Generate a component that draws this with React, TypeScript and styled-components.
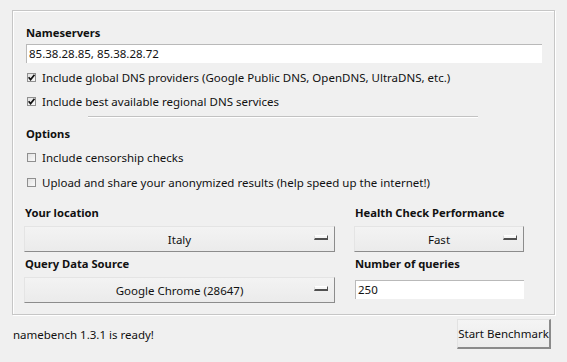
import React from "react";
import styled, { createGlobalStyle } from "styled-components";

const Global = createGlobalStyle`
  html, body { margin: 0; padding: 0; }
  body {
    background: #f0f0f0;
    font-family: "Noto Sans", "Open Sans", sans-serif;
    font-size: 11.5px;
    color: #111;
  }
`;

const Window = styled.div`
  width: 567px;
  height: 362px;
  box-sizing: border-box;
  padding: 10px 12px 0 12px;
  background: #f0f0f0;
  display: flex;
  flex-direction: column;
`;

const Panel = styled.div`
  box-sizing: border-box;
  width: 543px;
  height: 305px;
  border: 1px solid #c6c6c6;
  box-shadow: inset 1px 1px 0 #ffffff, 1px 1px 0 #ffffff;
  padding: 14px 12px 0 13px;
  display: flex;
  flex-direction: column;
`;

const Heading = styled.div<{ $mt?: number; $ml?: number }>`
  font-weight: 700;
  font-size: 11.2px;
  line-height: 16px;
  height: 16px;
  margin-top: ${(p) => p.$mt ?? 0}px;
  margin-left: ${(p) => p.$ml ?? 0}px;
`;

const TextInput = styled.div<{ $w?: number; $mt?: number; $ml?: number }>`
  box-sizing: border-box;
  width: ${(p) => (p.$w ? `${p.$w}px` : "100%")};
  height: 19px;
  margin-top: ${(p) => p.$mt ?? 0}px;
  margin-left: ${(p) => p.$ml ?? 0}px;
  background: #fff;
  border-top: 1px solid #b9b9b9;
  border-left: 1px solid #b9b9b9;
  padding: 0 2px;
  font-size: 11.5px;
  line-height: 18px;
  white-space: nowrap;
`;

const CheckRow = styled.label<{ $mt: number }>`
  display: flex;
  align-items: center;
  gap: 6px;
  margin-top: ${(p) => p.$mt}px;
  margin-left: 1px;
  height: 16px;
  font-size: 11.5px;
  white-space: nowrap;
`;

const Box = styled.span`
  box-sizing: border-box;
  width: 9px;
  height: 9px;
  border: 1px solid #8f8f8f;
  background: linear-gradient(135deg, #e2e2e2, #fafafa);
  display: inline-flex;
  align-items: center;
  justify-content: center;
`;

const Separator = styled.div`
  height: 1px;
  background: #c2c2c2;
  border-bottom: 1px solid #fff;
  margin: 7px 0 0 62px;
  width: 390px;
`;

const Grid = styled.div`
  display: grid;
  grid-template-columns: 311px 170px;
  column-gap: 19px;
  margin-top: 15px;
  margin-left: -2px;
`;

const Cell = styled.div<{ $mt?: number }>`
  display: flex;
  flex-direction: column;
  margin-top: ${(p) => p.$mt ?? 0}px;
`;

const Select = styled.div`
  box-sizing: border-box;
  height: 26px;
  margin-top: 5px;
  border-top: 1px solid #e4e4e4;
  border-left: 1px solid #e4e4e4;
  border-right: 1px solid #8c8c8c;
  border-bottom: 1px solid #8c8c8c;
  background: linear-gradient(#f3f3f3, #ebebeb);
  position: relative;
  display: flex;
  align-items: center;
  justify-content: center;
  font-size: 11.5px;
`;

const Indicator = styled.span`
  position: absolute;
  right: 6px;
  top: 8px;
  width: 14px;
  height: 5px;
  box-sizing: border-box;
  background: #f6f6f6;
  border-top: 1px solid #ffffff;
  border-left: 1px solid #dcdcdc;
  border-right: 1px solid #505050;
  border-bottom: 2px solid #505050;
`;

const Footer = styled.div`
  display: flex;
  align-items: center;
  justify-content: space-between;
  padding: 4px 4px 0 1px;
`;

const Status = styled.div`
  font-size: 11.5px;
`;

const Button = styled.button`
  box-sizing: border-box;
  width: 94px;
  height: 30px;
  font-family: inherit;
  font-size: 11.5px;
  white-space: nowrap;
  color: #111;
  background: linear-gradient(#f4f4f4, #ececec);
  border-top: 1px solid #e2e2e2;
  border-left: 1px solid #e2e2e2;
  border-right: 2px solid #8a8a8a;
  border-bottom: 2px solid #8a8a8a;
  padding: 0;
`;

const Check = ({ checked }: { checked: boolean }) => (
  <Box>
    {checked && (
      <svg width="7" height="7" viewBox="0 0 7 7">
        <path d="M0.6 3.2 L2.6 5.6 L6.5 0.8" stroke="#111" strokeWidth="1.7" fill="none" />
      </svg>
    )}
  </Box>
);

export default function App() {
  return (
    <>
      <Global />
      <Window>
        <Panel>
          <Heading>Nameservers</Heading>
          <TextInput $mt={3}>85.38.28.85, 85.38.28.72</TextInput>
          <CheckRow $mt={6}>
            <Check checked />
            Include global DNS providers (Google Public DNS, OpenDNS, UltraDNS, etc.)
          </CheckRow>
          <CheckRow $mt={8}>
            <Check checked />
            Include best available regional DNS services
          </CheckRow>
          <Separator />
          <Heading $mt={8}>Options</Heading>
          <CheckRow $mt={7}>
            <Check checked={false} />
            Include censorship checks
          </CheckRow>
          <CheckRow $mt={9}>
            <Check checked={false} />
            Upload and share your anonymized results (help speed up the internet!)
          </CheckRow>
          <Grid>
            <Cell>
              <Heading $ml={1}>Your location</Heading>
              <Select>
                Italy
                <Indicator />
              </Select>
            </Cell>
            <Cell>
              <Heading $ml={1}>Health Check Performance</Heading>
              <Select>
                Fast
                <Indicator />
              </Select>
            </Cell>
            <Cell $mt={4}>
              <Heading $ml={1}>Query Data Source</Heading>
              <Select>
                Google Chrome (28647)
                <Indicator />
              </Select>
            </Cell>
            <Cell $mt={4}>
              <Heading $ml={1}>Number of queries</Heading>
              <TextInput $w={169} $mt={8} $ml={1}>250</TextInput>
            </Cell>
          </Grid>
        </Panel>
        <Footer>
          <Status>namebench 1.3.1 is ready!</Status>
          <Button>Start Benchmark</Button>
        </Footer>
      </Window>
    </>
  );
}
